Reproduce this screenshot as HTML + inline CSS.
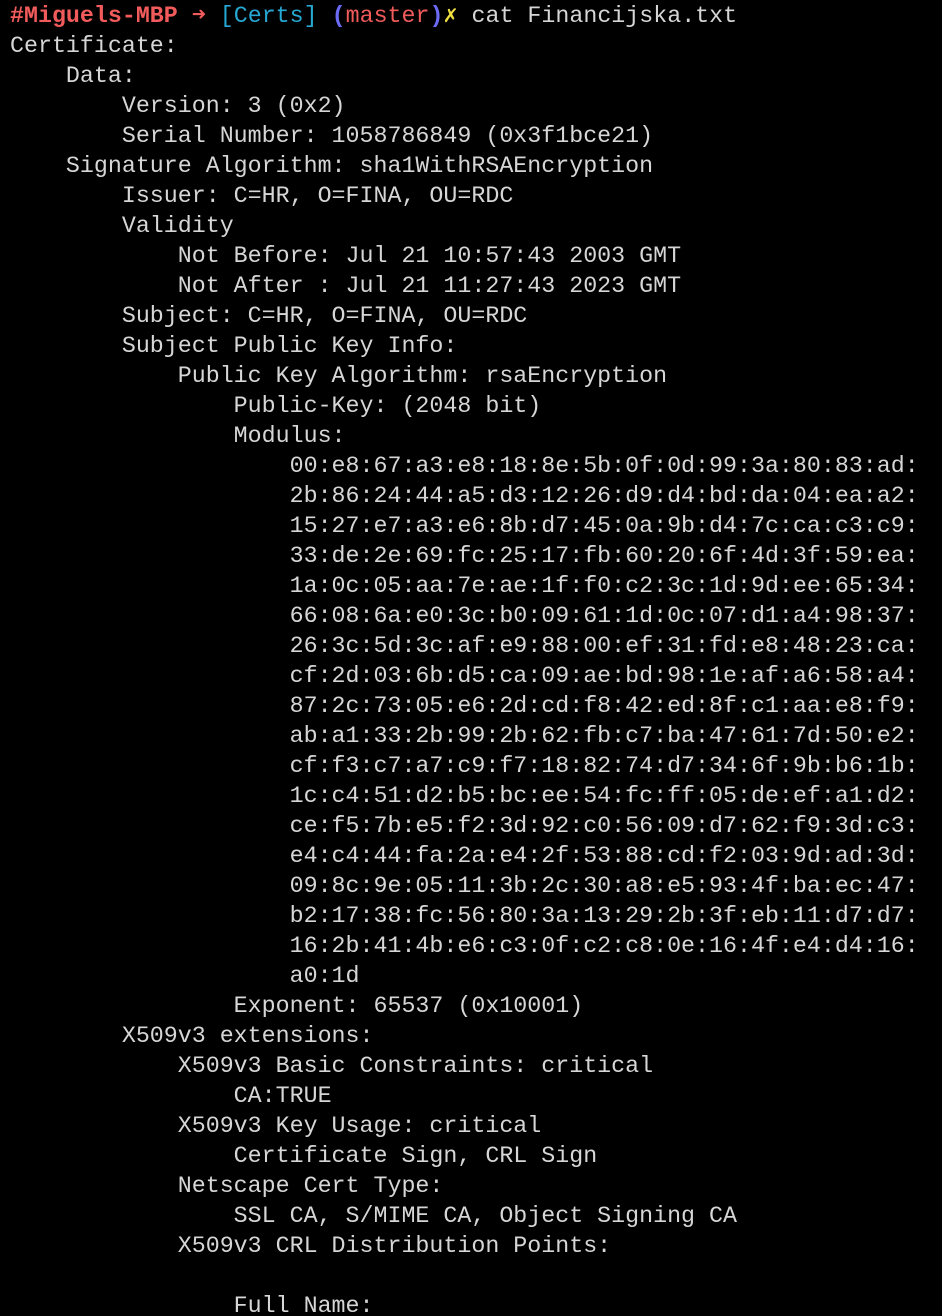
<!DOCTYPE html>
<html><head><meta charset="utf-8"><style>
html,body{margin:0;background:#000;width:942px;height:1316px;overflow:hidden}
pre{margin:0;padding:1px 0 0 10px;font-family:"Liberation Mono","DejaVu Sans Mono",monospace;font-size:23.3px;line-height:30px;color:#d6d6d6;white-space:pre}
.r{color:#f25b5b;font-weight:bold}.c{color:#26a8d3}.b{color:#6b6bf5;font-weight:bold}.m{color:#f25b5b}.y{color:#f0e040;font-weight:bold}
</style></head><body><pre><span class="r">#Miguels-MBP ➜ </span><span class="c">[Certs]</span> <span class="b">(</span><span class="m">master</span><span class="b">)</span><span class="y">✗</span> cat Financijska.txt
Certificate:
    Data:
        Version: 3 (0x2)
        Serial Number: 1058786849 (0x3f1bce21)
    Signature Algorithm: sha1WithRSAEncryption
        Issuer: C=HR, O=FINA, OU=RDC
        Validity
            Not Before: Jul 21 10:57:43 2003 GMT
            Not After : Jul 21 11:27:43 2023 GMT
        Subject: C=HR, O=FINA, OU=RDC
        Subject Public Key Info:
            Public Key Algorithm: rsaEncryption
                Public-Key: (2048 bit)
                Modulus:
                    00:e8:67:a3:e8:18:8e:5b:0f:0d:99:3a:80:83:ad:
                    2b:86:24:44:a5:d3:12:26:d9:d4:bd:da:04:ea:a2:
                    15:27:e7:a3:e6:8b:d7:45:0a:9b:d4:7c:ca:c3:c9:
                    33:de:2e:69:fc:25:17:fb:60:20:6f:4d:3f:59:ea:
                    1a:0c:05:aa:7e:ae:1f:f0:c2:3c:1d:9d:ee:65:34:
                    66:08:6a:e0:3c:b0:09:61:1d:0c:07:d1:a4:98:37:
                    26:3c:5d:3c:af:e9:88:00:ef:31:fd:e8:48:23:ca:
                    cf:2d:03:6b:d5:ca:09:ae:bd:98:1e:af:a6:58:a4:
                    87:2c:73:05:e6:2d:cd:f8:42:ed:8f:c1:aa:e8:f9:
                    ab:a1:33:2b:99:2b:62:fb:c7:ba:47:61:7d:50:e2:
                    cf:f3:c7:a7:c9:f7:18:82:74:d7:34:6f:9b:b6:1b:
                    1c:c4:51:d2:b5:bc:ee:54:fc:ff:05:de:ef:a1:d2:
                    ce:f5:7b:e5:f2:3d:92:c0:56:09:d7:62:f9:3d:c3:
                    e4:c4:44:fa:2a:e4:2f:53:88:cd:f2:03:9d:ad:3d:
                    09:8c:9e:05:11:3b:2c:30:a8:e5:93:4f:ba:ec:47:
                    b2:17:38:fc:56:80:3a:13:29:2b:3f:eb:11:d7:d7:
                    16:2b:41:4b:e6:c3:0f:c2:c8:0e:16:4f:e4:d4:16:
                    a0:1d
                Exponent: 65537 (0x10001)
        X509v3 extensions:
            X509v3 Basic Constraints: critical
                CA:TRUE
            X509v3 Key Usage: critical
                Certificate Sign, CRL Sign
            Netscape Cert Type:
                SSL CA, S/MIME CA, Object Signing CA
            X509v3 CRL Distribution Points:

                Full Name:
</pre></body></html>
